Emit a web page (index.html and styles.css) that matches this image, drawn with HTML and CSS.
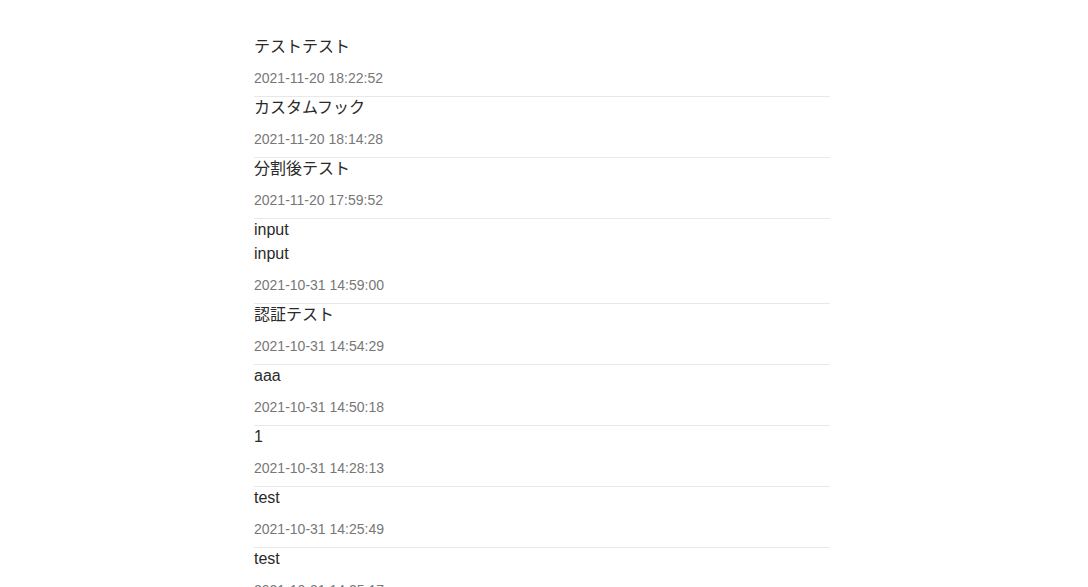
FILE: index.html
```html
<!DOCTYPE html>
<html lang="ja">
<head>
<meta charset="utf-8">
<title>Posts</title>
<link rel="stylesheet" href="styles.css">
</head>
<body>
<main class="list">
  <div class="item"><div class="title">テストテスト</div><div class="date">2021-11-20 18:22:52</div></div>
  <div class="item"><div class="title">カスタムフック</div><div class="date">2021-11-20 18:14:28</div></div>
  <div class="item"><div class="title">分割後テスト</div><div class="date">2021-11-20 17:59:52</div></div>
  <div class="item"><div class="title">input<br>input</div><div class="date">2021-10-31 14:59:00</div></div>
  <div class="item"><div class="title">認証テスト</div><div class="date">2021-10-31 14:54:29</div></div>
  <div class="item"><div class="title">aaa</div><div class="date">2021-10-31 14:50:18</div></div>
  <div class="item"><div class="title">1</div><div class="date">2021-10-31 14:28:13</div></div>
  <div class="item"><div class="title">test</div><div class="date">2021-10-31 14:25:49</div></div>
  <div class="item"><div class="title">test</div><div class="date">2021-10-31 14:25:17</div></div>
  <div class="item"><div class="title">test</div><div class="date">2021-10-31 14:20:03</div></div>
</main>
</body>
</html>
```
FILE: styles.css
```css
html, body {
  margin: 0;
  padding: 0;
  background: #ffffff;
}
body {
  font-family: "Liberation Sans", "Noto Sans CJK JP", Arial, sans-serif;
  color: #222222;
}
.list {
  width: 576px;
  margin: 36px 0 0 254px;
}
.item {
  padding: 0 0 8px 0;
  border-bottom: 1px solid #e8e8e8;
}
.title {
  font-size: 16px;
  line-height: 24px;
  margin-top: -1px;
  color: #2a2a2a;
}
.date {
  margin-top: 9px;
  font-size: 14px;
  line-height: 20px;
  color: #777777;
}
```
